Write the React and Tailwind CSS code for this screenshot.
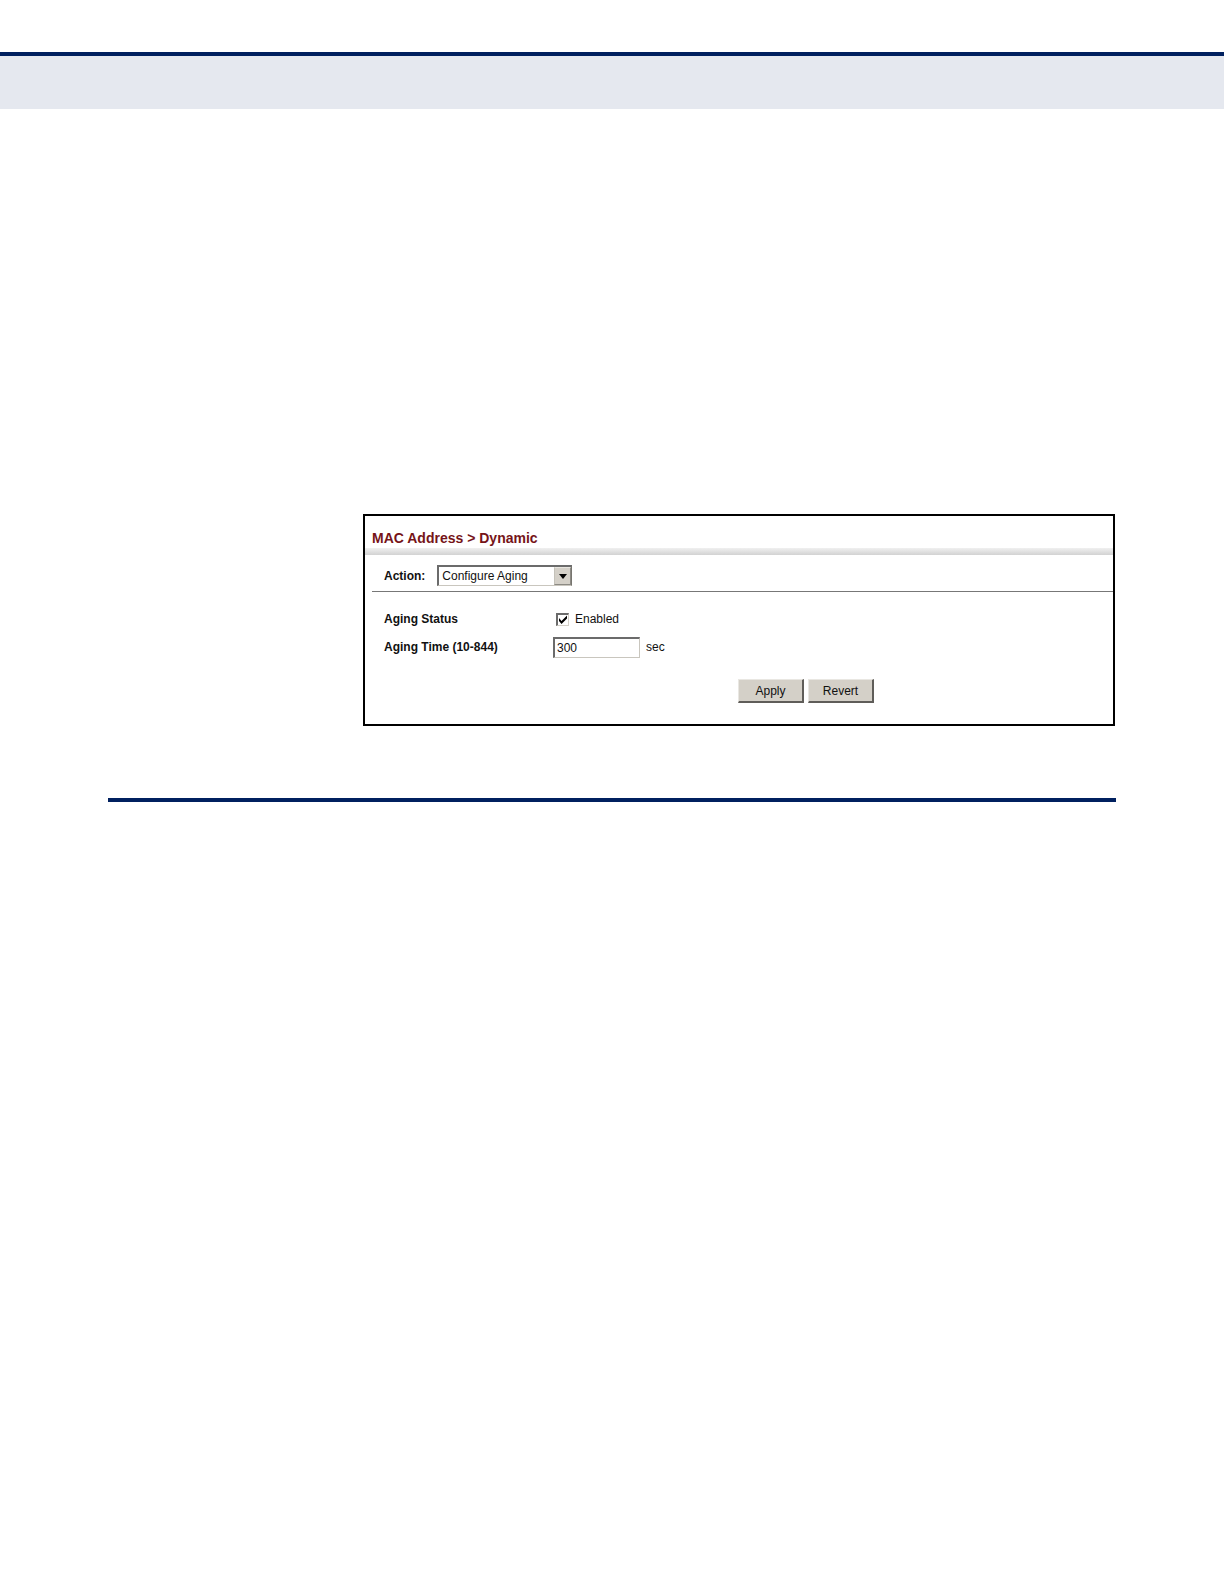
// App.jsx
import React, { useState } from "react";

function ActionSelect({ value, onChange }) {
  return (
    <div className="flex items-center gap-3 pl-3">
      <label htmlFor="action" className="font-bold">
        Action:
      </label>
      <div className="relative flex">
        <select
          id="action"
          value={value}
          onChange={(e) => onChange(e.target.value)}
          className="h-[21px] w-[135px] appearance-none border-t-2 border-r border-b border-l-2 border-t-[#6b6b6b] border-r-[#77756f] border-b-[#c9c6be] border-l-[#6b6b6b] bg-white pr-5 pb-px pl-[3px]"
        >
          <option>Configure Aging</option>
          <option>Show Dynamic MAC</option>
          <option>Clear Dynamic MAC</option>
        </select>
        <span className="pointer-events-none absolute top-0.5 right-px bottom-px flex w-[17px] items-center justify-center border border-t-[#e8e6e0] border-r-[#8c8a84] border-b-[#8c8a84] border-l-[#c4c1b9] bg-[#d4d0c8]">
          <svg width="8" height="5" viewBox="0 0 8 5" aria-hidden="true">
            <path d="M0 0h8L4 5z" fill="#000" />
          </svg>
        </span>
      </div>
    </div>
  );
}

function PushButton({ children, onClick }) {
  return (
    <button
      type="button"
      onClick={onClick}
      className="h-6 w-[66px] border-t border-r-2 border-b-2 border-l border-t-[#e9e7e2] border-r-[#5f5d59] border-b-[#5f5d59] border-l-[#e9e7e2] bg-[#d4d0c8]"
    >
      {children}
    </button>
  );
}

function App() {
  const [action, setAction] = useState("Configure Aging");
  const [enabled, setEnabled] = useState(true);
  const [agingTime, setAgingTime] = useState("300");

  const revert = () => {
    setEnabled(true);
    setAgingTime("300");
  };

  return (
    <div className="min-h-screen bg-white pt-[52px] font-['Liberation_Sans',Arial,sans-serif] text-xs text-[#111]">
      <header className="h-[57px] border-t-4 border-[#00205f] bg-[#e5e8ef]" />

      <main className="px-[108px] pt-[405px]">
        <section className="mr-px ml-[255px] border-2 border-black">
          <h1 className="pt-3 pl-[7px] text-sm leading-5 font-bold text-[#761418]">
            MAC Address &gt; Dynamic
          </h1>
          <div className="h-[7px] bg-linear-to-b from-[#f0f0f0] to-[#d2d2d2]" />

          <div className="ml-[7px] border-b border-[#777] pt-[10px] pb-[5px]">
            <ActionSelect value={action} onChange={setAction} />
          </div>

          <form className="pt-[14px] pb-[21px]">
            <div className="grid grid-cols-[169px_1fr] gap-y-[5px] pl-[19px]">
              <label htmlFor="aging-status" className="leading-[26px] font-bold">
                Aging Status
              </label>
              <div className="flex h-[26px] items-center gap-[6px] pl-[3px]">
                <span className="relative flex">
                  <input
                    id="aging-status"
                    type="checkbox"
                    checked={enabled}
                    onChange={(e) => setEnabled(e.target.checked)}
                    className="peer size-[13px] appearance-none border-t-2 border-r border-b border-l-2 border-t-[#6b6b6b] border-r-[#d4d0c8] border-b-[#d4d0c8] border-l-[#6b6b6b] bg-white"
                  />
                  <svg
                    width="13"
                    height="13"
                    viewBox="0 0 13 13"
                    aria-hidden="true"
                    className="pointer-events-none absolute inset-0 hidden peer-checked:block"
                  >
                    <path d="M3 5v3l2.500 3L11 5.500v-3L5.500 8z" fill="#000" />
                  </svg>
                </span>
                <label htmlFor="aging-status">Enabled</label>
              </div>

              <label htmlFor="aging-time" className="leading-[21px] font-bold">
                Aging Time (10-844)
              </label>
              <div className="flex gap-[6px] leading-[21px]">
                <input
                  id="aging-time"
                  type="text"
                  value={agingTime}
                  onChange={(e) => setAgingTime(e.target.value)}
                  className="h-[21px] w-[87px] border-t-2 border-r border-b border-l-2 border-t-[#6b6b6b] border-r-[#c9c6be] border-b-[#c9c6be] border-l-[#6b6b6b] bg-white px-0.5"
                />
                <span>sec</span>
              </div>
            </div>

            <div className="mt-[21px] flex justify-center gap-1 pl-[134px]">
              <PushButton>Apply</PushButton>
              <PushButton onClick={revert}>Revert</PushButton>
            </div>
          </form>
        </section>

        <hr className="mt-[72px] border-t-4 border-[#00205f]" />
      </main>
    </div>
  );
}

export default App;
